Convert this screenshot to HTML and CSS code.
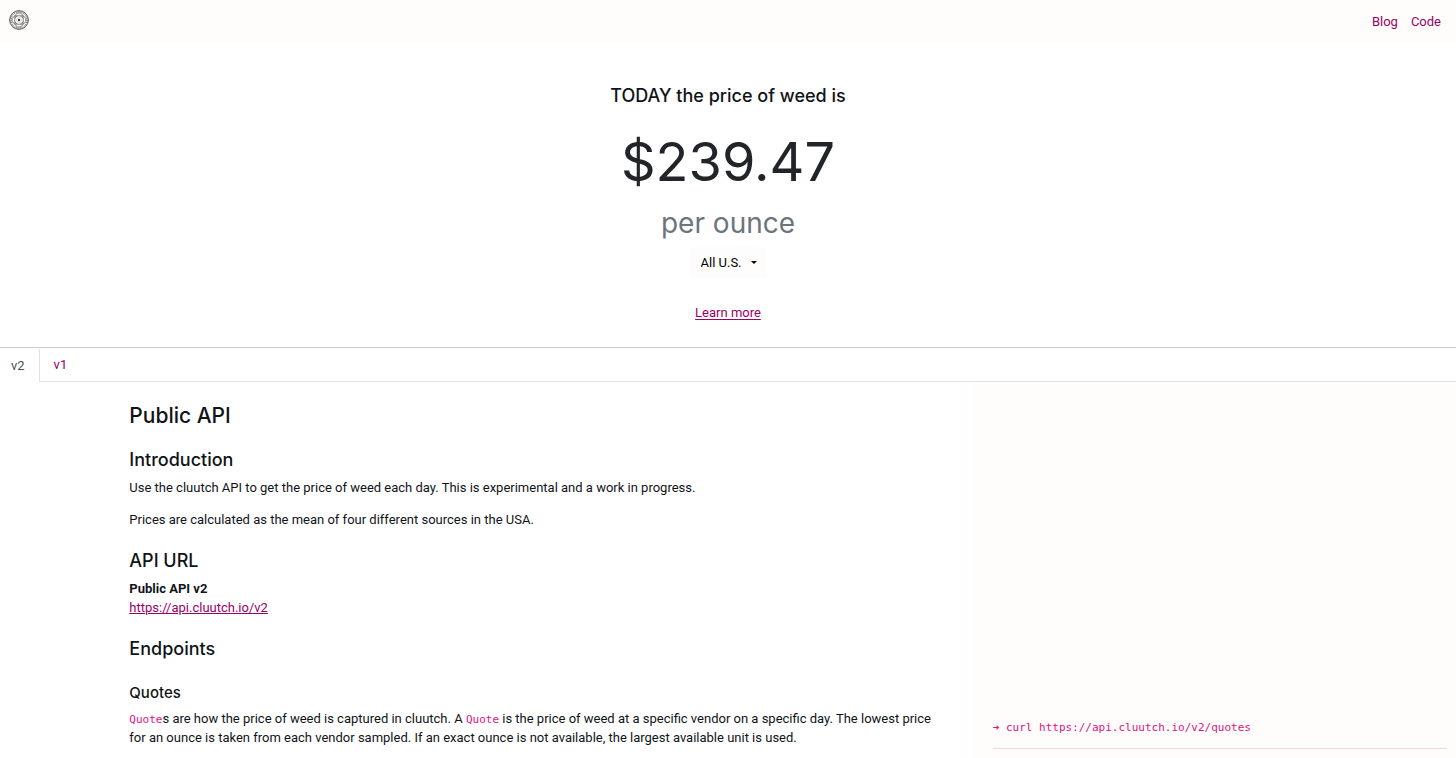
FILE: index.html
```html
<!DOCTYPE html>
<html lang="en">
<head>
    <meta charset="UTF-8">
    <meta name="viewport" content="width=device-width, initial-scale=1">
    <title>cluutch</title>
    <link rel="stylesheet" href="styles.css">
</head>
<body>
<nav class="navbar">
    <a class="brand" href="#" aria-label="cluutch">
        <svg width="20" height="20" viewBox="0 0 20 20" fill="none" stroke="#333">
            <circle cx="10" cy="10" r="9.3" stroke-width=".9"/>
            <circle cx="10" cy="10" r="8" stroke-width=".8" stroke-dasharray="1.2 .8"/>
            <g stroke-width=".6">
                <circle cx="10" cy="7.2" r="4.2"/>
                <circle cx="10" cy="12.8" r="4.2"/>
                <circle cx="7.2" cy="10" r="4.2"/>
                <circle cx="12.8" cy="10" r="4.2"/>
            </g>
            <circle cx="10" cy="10" r="4.3" fill="#fffdfb" stroke-width=".6"/>
            <circle cx="10" cy="10" r="2.6" stroke="#bbb" stroke-width=".5"/>
            <circle cx="10" cy="10" r="1.2" fill="#333" stroke="none"/>
        </svg>
    </a>
    <div class="nav-links">
        <a href="#">Blog</a>
        <a href="#">Code</a>
    </div>
</nav>

<header class="hero">
    <h1>TODAY the price of weed is</h1>
    <p class="price">$239.47</p>
    <p class="unit">per ounce</p>
    <div class="region">
        <select aria-label="Region">
            <option>All U.S.</option>
        </select>
        <span class="caret"></span>
    </div>
    <a class="learn-more" href="#docs">Learn more</a>
</header>

<div class="tabs" role="tablist">
    <button class="tab active" type="button" role="tab" aria-selected="true">v2</button>
    <button class="tab" type="button" role="tab" aria-selected="false">v1</button>
</div>

<main class="docs" id="docs">
    <div class="docs-text">
        <h2>Public API</h2>

        <h3>Introduction</h3>
        <p>Use the cluutch API to get the price of weed each day. This is experimental and a work in progress.</p>
        <p>Prices are calculated as the mean of four different sources in the USA.</p>

        <h3>API URL</h3>
        <p><strong>Public API v2</strong><br><a href="https://api.cluutch.io/v2">https://api.cluutch.io/v2</a></p>

        <h3>Endpoints</h3>

        <h4>Quotes</h4>
        <p><code>Quote</code>s are how the price of weed is captured in cluutch. A <code>Quote</code> is the price of weed at a specific vendor on a specific day. The lowest price for an ounce is taken from each vendor sampled. If an exact ounce is not available, the largest available unit is used.</p>
    </div>
    <aside class="docs-code">
        <code>➜ curl https://api.cluutch.io/v2/quotes</code>
        <hr>
    </aside>
</main>
</body>
</html>
```

FILE: styles.css
```css
* {
    box-sizing: border-box;
}

body {
    margin: 0;
    min-height: 100vh;
    display: flex;
    flex-direction: column;
    font-family: Roboto, "Liberation Sans", sans-serif;
    font-size: 13px;
    line-height: 19px;
    color: #101418;
    background-color: #fff;
}

h1, h2, h3, h4, p {
    margin: 0;
}

h1, h2, h3, h4, .price, .unit {
    font-family: Inter, "Liberation Sans", sans-serif;
}

h1, h2, h3, h4 {
    font-weight: 500;
}

a {
    color: #990066;
}

code {
    font-family: "DejaVu Sans Mono", monospace;
    font-size: 11px;
    line-height: 13px;
    color: #dd1480;
}

/* top bar */
.navbar {
    display: flex;
    justify-content: space-between;
    align-items: center;
    height: 43px;
    padding: 0 15px 0 9px;
    background-color: #fffdfb;
}

.brand {
    display: flex;
    padding-bottom: 4px;
}

.nav-links {
    display: flex;
    gap: 13px;
}

.nav-links a {
    text-decoration: none;
}

/* price */
.hero {
    display: flex;
    flex-direction: column;
    align-items: center;
    padding: 41px 16px 25px;
}

.hero h1 {
    font-size: 18px;
    line-height: 24px;
}

.price {
    margin-top: 19px;
    font-size: 54px;
    line-height: 70px;
    color: #212529;
}

.unit {
    margin-top: 6px;
    font-size: 28px;
    line-height: 40px;
    color: #6c757d;
}

.region {
    display: grid;
    align-items: center;
    margin-top: 4px;
}

.region select,
.caret {
    grid-area: 1 / 1;
}

.region select {
    appearance: none;
    padding: 6px 24px 6px 11px;
    border: none;
    border-radius: 3px;
    background-color: #fffdfb;
    color: #000;
    font: inherit;
    cursor: pointer;
}

.caret {
    justify-self: end;
    margin-right: 10px;
    border-top: 3px solid #000;
    border-left: 3px solid transparent;
    border-right: 3px solid transparent;
    pointer-events: none;
}

.learn-more {
    margin-top: 25px;
    text-underline-offset: 2px;
}

/* version tabs */
.tabs {
    display: flex;
    height: 35px;
    border-top: 1px solid #c9ccd0;
    border-bottom: 1px solid #dee2e6;
}

.tab {
    padding: 0 14px;
    border: none;
    background: none;
    color: #990066;
    font: inherit;
    cursor: pointer;
}

.tab.active {
    margin-bottom: -1px;
    padding-left: 11px;
    border-right: 1px solid #dee2e6;
    border-top-right-radius: 3px;
    background-color: #fff;
    color: #495057;
}

/* api docs */
.docs {
    flex: 1;
    display: grid;
    grid-template-columns: 1fr 7fr 4fr;
}

.docs-text {
    grid-column: 2;
    padding: 20px 24px 0 8px;
}

.docs-text h2 {
    margin-bottom: 18px;
    font-size: 21px;
    line-height: 28px;
}

.docs-text h3 {
    margin-bottom: 6px;
    font-size: 18px;
    line-height: 24px;
}

.docs-text h4 {
    margin: 22px 0 6px;
    font-size: 15px;
    line-height: 20px;
}

.docs-text p {
    margin-bottom: 12px;
}

.docs-text p + h3 {
    margin-top: 20px;
}

.docs-text p + p {
    margin-top: 13px;
}

.docs-code {
    display: flex;
    flex-direction: column;
    justify-content: flex-end;
    padding: 0 9px 10px 22px;
    background-color: #fffdfb;
}

.docs-code hr {
    width: 100%;
    margin: 14px 0 0;
    border: none;
    border-top: 1px solid #f7d3e6;
}
```
